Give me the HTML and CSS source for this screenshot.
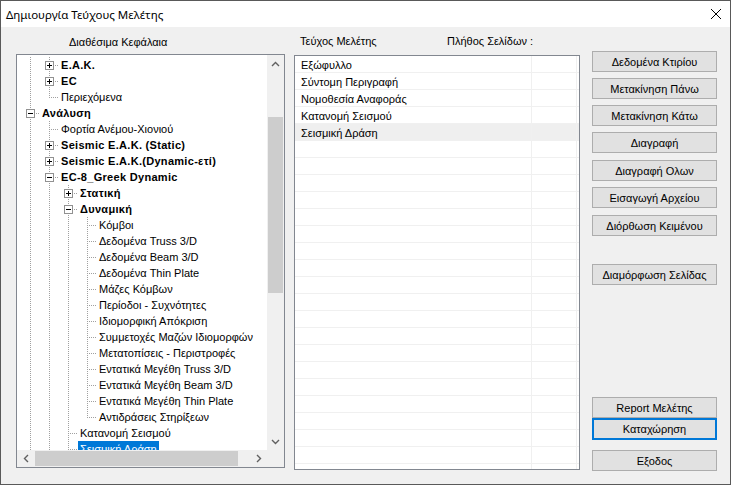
FILE: index.html
```html
<!DOCTYPE html>
<html lang="el">
<head>
<meta charset="utf-8">
<title>Δημιουργία Τεύχους Μελέτης</title>
<link rel="stylesheet" href="styles.css">
</head>
<body>
<div class="window">
  <div class="titlebar">
    <span class="title">Δημιουργία Τεύχους Μελέτης</span>
    <svg class="close" width="10" height="10" viewBox="0 0 10 10"><path d="M0 0L10 10M10 0L0 10" stroke="#000" stroke-width="1"/></svg>
  </div>
  <div class="client">
    <section class="left">
      <div class="left-hdr">Διαθέσιμα Κεφάλαια</div>
      <div class="tree">
        <div class="tv">
          <div class="row"><i class="g"></i><i class="n"><b class="box plus"></b></i><span class="lbl b">Ε.Α.Κ.</span></div>
          <div class="row"><i class="g"></i><i class="n"><b class="box plus"></b></i><span class="lbl b">EC</span></div>
          <div class="row"><i class="g"></i><i class="n last"></i><span class="lbl">Περιεχόμενα</span></div>
          <div class="row"><i class="n"><b class="box"></b></i><span class="lbl b">Ανάλυση</span></div>
          <div class="row"><i class="g"></i><i class="n"></i><span class="lbl">Φορτία Ανέμου-Χιονιού</span></div>
          <div class="row"><i class="g"></i><i class="n"><b class="box plus"></b></i><span class="lbl b">Seismic Ε.Α.Κ. (Static)</span></div>
          <div class="row"><i class="g"></i><i class="n"><b class="box plus"></b></i><span class="lbl b">Seismic Ε.Α.Κ.(Dynamic-ετί)</span></div>
          <div class="row"><i class="g"></i><i class="n"><b class="box"></b></i><span class="lbl b">EC-8_Greek Dynamic</span></div>
          <div class="row"><i class="g"></i><i class="g"></i><i class="n"><b class="box plus"></b></i><span class="lbl b">Στατική</span></div>
          <div class="row"><i class="g"></i><i class="g"></i><i class="n"><b class="box"></b></i><span class="lbl b">Δυναμική</span></div>
          <div class="row"><i class="g"></i><i class="g"></i><i class="g"></i><i class="n"></i><span class="lbl">Κόμβοι</span></div>
          <div class="row"><i class="g"></i><i class="g"></i><i class="g"></i><i class="n"></i><span class="lbl">Δεδομένα Truss 3/D</span></div>
          <div class="row"><i class="g"></i><i class="g"></i><i class="g"></i><i class="n"></i><span class="lbl">Δεδομένα Beam 3/D</span></div>
          <div class="row"><i class="g"></i><i class="g"></i><i class="g"></i><i class="n"></i><span class="lbl">Δεδομένα Thin Plate</span></div>
          <div class="row"><i class="g"></i><i class="g"></i><i class="g"></i><i class="n"></i><span class="lbl">Μάζες Κόμβων</span></div>
          <div class="row"><i class="g"></i><i class="g"></i><i class="g"></i><i class="n"></i><span class="lbl">Περίοδοι - Συχνότητες</span></div>
          <div class="row"><i class="g"></i><i class="g"></i><i class="g"></i><i class="n"></i><span class="lbl">Ιδιομορφική Απόκριση</span></div>
          <div class="row"><i class="g"></i><i class="g"></i><i class="g"></i><i class="n"></i><span class="lbl">Συμμετοχές Μαζών Ιδιομορφών</span></div>
          <div class="row"><i class="g"></i><i class="g"></i><i class="g"></i><i class="n"></i><span class="lbl">Μετατοπίσεις - Περιστροφές</span></div>
          <div class="row"><i class="g"></i><i class="g"></i><i class="g"></i><i class="n"></i><span class="lbl">Εντατικά Μεγέθη Truss 3/D</span></div>
          <div class="row"><i class="g"></i><i class="g"></i><i class="g"></i><i class="n"></i><span class="lbl">Εντατικά Μεγέθη Beam 3/D</span></div>
          <div class="row"><i class="g"></i><i class="g"></i><i class="g"></i><i class="n"></i><span class="lbl">Εντατικά Μεγέθη Thin Plate</span></div>
          <div class="row"><i class="g"></i><i class="g"></i><i class="g"></i><i class="n last"></i><span class="lbl">Αντιδράσεις Στηρίξεων</span></div>
          <div class="row"><i class="g"></i><i class="g"></i><i class="n"></i><span class="lbl">Κατανομή Σεισμού</span></div>
          <div class="row"><i class="g"></i><i class="g"></i><i class="n"></i><span class="lbl sel">Σεισμική Δράση</span></div>
        </div>
        <div class="vs">
          <div class="sb-btn"><svg width="9" height="6" viewBox="0 0 9 6"><path d="M1 5L4.5 1.5L8 5" fill="none" stroke="#606060" stroke-width="1.4"/></svg></div>
          <div class="vtrack"><div class="vthumb"></div></div>
          <div class="sb-btn"><svg width="9" height="6" viewBox="0 0 9 6"><path d="M1 1L4.5 4.5L8 1" fill="none" stroke="#606060" stroke-width="1.4"/></svg></div>
        </div>
        <div class="hs">
          <div class="sb-btn h"><svg width="6" height="9" viewBox="0 0 6 9"><path d="M5 1L1.5 4.5L5 8" fill="none" stroke="#606060" stroke-width="1.4"/></svg></div>
          <div class="htrack"><div class="hthumb"></div></div>
          <div class="sb-btn h"><svg width="6" height="9" viewBox="0 0 6 9"><path d="M1 1L4.5 4.5L1 8" fill="none" stroke="#606060" stroke-width="1.4"/></svg></div>
        </div>
        <div class="corner"></div>
      </div>
    </section>

    <section class="mid">
      <div class="mid-hdr"><span class="c1">Τεύχος Μελέτης</span><span>Πλήθος Σελίδων :</span></div>
      <div class="list">
        <div class="lrow"><span class="lc1">Εξώφυλλο</span><span class="lc2"></span></div>
        <div class="lrow"><span class="lc1">Σύντομη Περιγραφή</span><span class="lc2"></span></div>
        <div class="lrow"><span class="lc1">Νομοθεσία Αναφοράς</span><span class="lc2"></span></div>
        <div class="lrow"><span class="lc1">Κατανομή Σεισμού</span><span class="lc2"></span></div>
        <div class="lrow hi"><span class="lc1">Σεισμική Δράση</span><span class="lc2"></span></div>
        <div class="lrow"><span class="lc1"></span><span class="lc2"></span></div>
        <div class="lrow"><span class="lc1"></span><span class="lc2"></span></div>
        <div class="lrow"><span class="lc1"></span><span class="lc2"></span></div>
        <div class="lrow"><span class="lc1"></span><span class="lc2"></span></div>
        <div class="lrow"><span class="lc1"></span><span class="lc2"></span></div>
        <div class="lrow"><span class="lc1"></span><span class="lc2"></span></div>
        <div class="lrow"><span class="lc1"></span><span class="lc2"></span></div>
        <div class="lrow"><span class="lc1"></span><span class="lc2"></span></div>
        <div class="lrow"><span class="lc1"></span><span class="lc2"></span></div>
        <div class="lrow"><span class="lc1"></span><span class="lc2"></span></div>
        <div class="lrow"><span class="lc1"></span><span class="lc2"></span></div>
        <div class="lrow"><span class="lc1"></span><span class="lc2"></span></div>
        <div class="lrow"><span class="lc1"></span><span class="lc2"></span></div>
        <div class="lrow"><span class="lc1"></span><span class="lc2"></span></div>
        <div class="lrow"><span class="lc1"></span><span class="lc2"></span></div>
        <div class="lrow"><span class="lc1"></span><span class="lc2"></span></div>
        <div class="lrow"><span class="lc1"></span><span class="lc2"></span></div>
        <div class="lrow"><span class="lc1"></span><span class="lc2"></span></div>
        <div class="lrow"><span class="lc1"></span><span class="lc2"></span></div>
        <div class="lrow"><span class="lc1"></span><span class="lc2"></span></div>
      </div>
    </section>

    <section class="right">
      <div class="btn">Δεδομένα Κτιρίου</div>
      <div class="btn">Μετακίνηση Πάνω</div>
      <div class="btn">Μετακίνηση Κάτω</div>
      <div class="btn">Διαγραφή</div>
      <div class="btn m7">Διαγραφή Ολων</div>
      <div class="btn">Εισαγωγή Αρχείου</div>
      <div class="btn m7">Διόρθωση Κειμένου</div>
      <div class="btn sep">Διαμόρφωση Σελίδας</div>
      <div class="btn push">Report Μελέτης</div>
      <div class="btn def">Καταχώρηση</div>
      <div class="btn exit">Εξοδος</div>
    </section>
  </div>
</div>
</body>
</html>
```

FILE: styles.css
```css
* { box-sizing: border-box; }
html, body { margin: 0; padding: 0; }
body {
  width: 731px;
  height: 485px;
  overflow: hidden;
  background: #f0f0f0;
  font-family: "Liberation Sans", Arial, sans-serif;
  font-size: 11px;
  color: #000;
}
.window {
  width: 731px;
  height: 485px;
  border: 1px solid #595959;
  display: flex;
  flex-direction: column;
}
.titlebar {
  height: 26px;
  flex: none;
  background: #fff;
  display: flex;
  align-items: center;
  padding: 0 9px 0 5px;
}
.title {
  flex: 1;
  font-family: "Noto Sans", "Liberation Sans", sans-serif;
  font-size: 11.5px;
  margin-top: 1px;
}
.close { display: block; flex: none; }

.client {
  flex: 1;
  display: flex;
  padding: 0 13px 0 15px;
  background: #f0f0f0;
}

/* left: tree */
.left { width: 269px; flex: none; display: flex; flex-direction: column; }
.left-hdr { height: 27px; padding: 8px 0 0 53px; line-height: 14px; }
.tree {
  width: 269px;
  height: 414px;
  border: 1px solid #828790;
  background: #fff;
  display: grid;
  grid-template-columns: 250px 17px;
  grid-template-rows: 395px 17px;
}
.tv { overflow: hidden; padding-top: 2px; }
.row {
  display: flex;
  height: 16px;
  padding-left: 4px;
  white-space: nowrap;
}
.g, .n { flex: none; width: 19px; height: 16px; display: block; }
.g {
  background: repeating-linear-gradient(to bottom, #a0a0a0 0 1px, transparent 1px 2px) 9px 0 / 1px 16px no-repeat;
}
.n {
  background:
    repeating-linear-gradient(to right, #a0a0a0 0 1px, transparent 1px 2px) 11px 8px / 8px 1px no-repeat,
    repeating-linear-gradient(to bottom, #a0a0a0 0 1px, transparent 1px 2px) 9px 0 / 1px 16px no-repeat;
}
.n.last { background-size: 8px 1px, 1px 9px; }
.box {
  display: block;
  width: 9px;
  height: 9px;
  margin: 4px 0 0 5px;
  border: 1px solid #919191;
  background: linear-gradient(#000, #000) center / 5px 1px no-repeat, #fff;
}
.box.plus {
  background:
    linear-gradient(#000, #000) center / 5px 1px no-repeat,
    linear-gradient(#000, #000) center / 1px 5px no-repeat,
    #fff;
}
.lbl { padding: 0 2px; line-height: 16px; }
.b { font-weight: bold; letter-spacing: 0.3px; }
.sel { background: #0078d7; color: #fff; }

.vs { display: flex; flex-direction: column; background: #f0f0f0; }
.sb-btn { height: 17px; flex: none; display: flex; align-items: center; justify-content: center; }
.sb-btn svg { display: block; }
.sb-btn.h { width: 17px; height: 17px; }
.vtrack { flex: 1; }
.vthumb { margin: 45px 1px 0; height: 176px; background: #cdcdcd; }
.hs { display: flex; background: #f0f0f0; }
.htrack { flex: 1; padding: 1px 0; }
.hthumb { margin-left: 1px; width: 203px; height: 15px; background: #cdcdcd; }
.corner { background: #f0f0f0; }

/* middle: list */
.mid { width: 286px; flex: none; margin-left: 9px; display: flex; flex-direction: column; }
.mid-hdr { height: 28px; padding: 7px 0 0 6px; line-height: 14px; display: flex; }
.mid-hdr .c1 { width: 147px; }
.list {
  height: 415px;
  border: 1px solid #828790;
  background: #fff;
  overflow: hidden;
}
.lrow { display: flex; height: 17px; border-bottom: 1px solid #f0f0f0; flex: none; }
.lrow.hi { background: #efefef; }
.lc1 {
  width: 237px;
  border-right: 1px solid #f0f0f0;
  padding: 2px 0 0 6px;
  line-height: 14px;
  white-space: nowrap;
}
.lc2 { width: 45px; border-right: 1px solid #f0f0f0; }

/* right: buttons */
.right {
  width: 125px;
  flex: none;
  margin-left: 12px;
  display: flex;
  flex-direction: column;
  padding: 24px 0 13px;
}
.btn {
  flex: none;
  height: 21px;
  margin-top: 6px;
  border: 1px solid #adadad;
  background: #e1e1e1;
  display: flex;
  align-items: center;
  justify-content: center;
  white-space: nowrap;
}
.btn:first-child { margin-top: 0; }
.btn.m7 { margin-top: 7px; }
.btn.sep { margin-top: 28px; }
.btn.push { margin-top: auto; }
.btn.def { height: 22px; margin-top: 0; border: 2px solid #0078d7; }
.btn.exit { margin-top: 10px; }
```
